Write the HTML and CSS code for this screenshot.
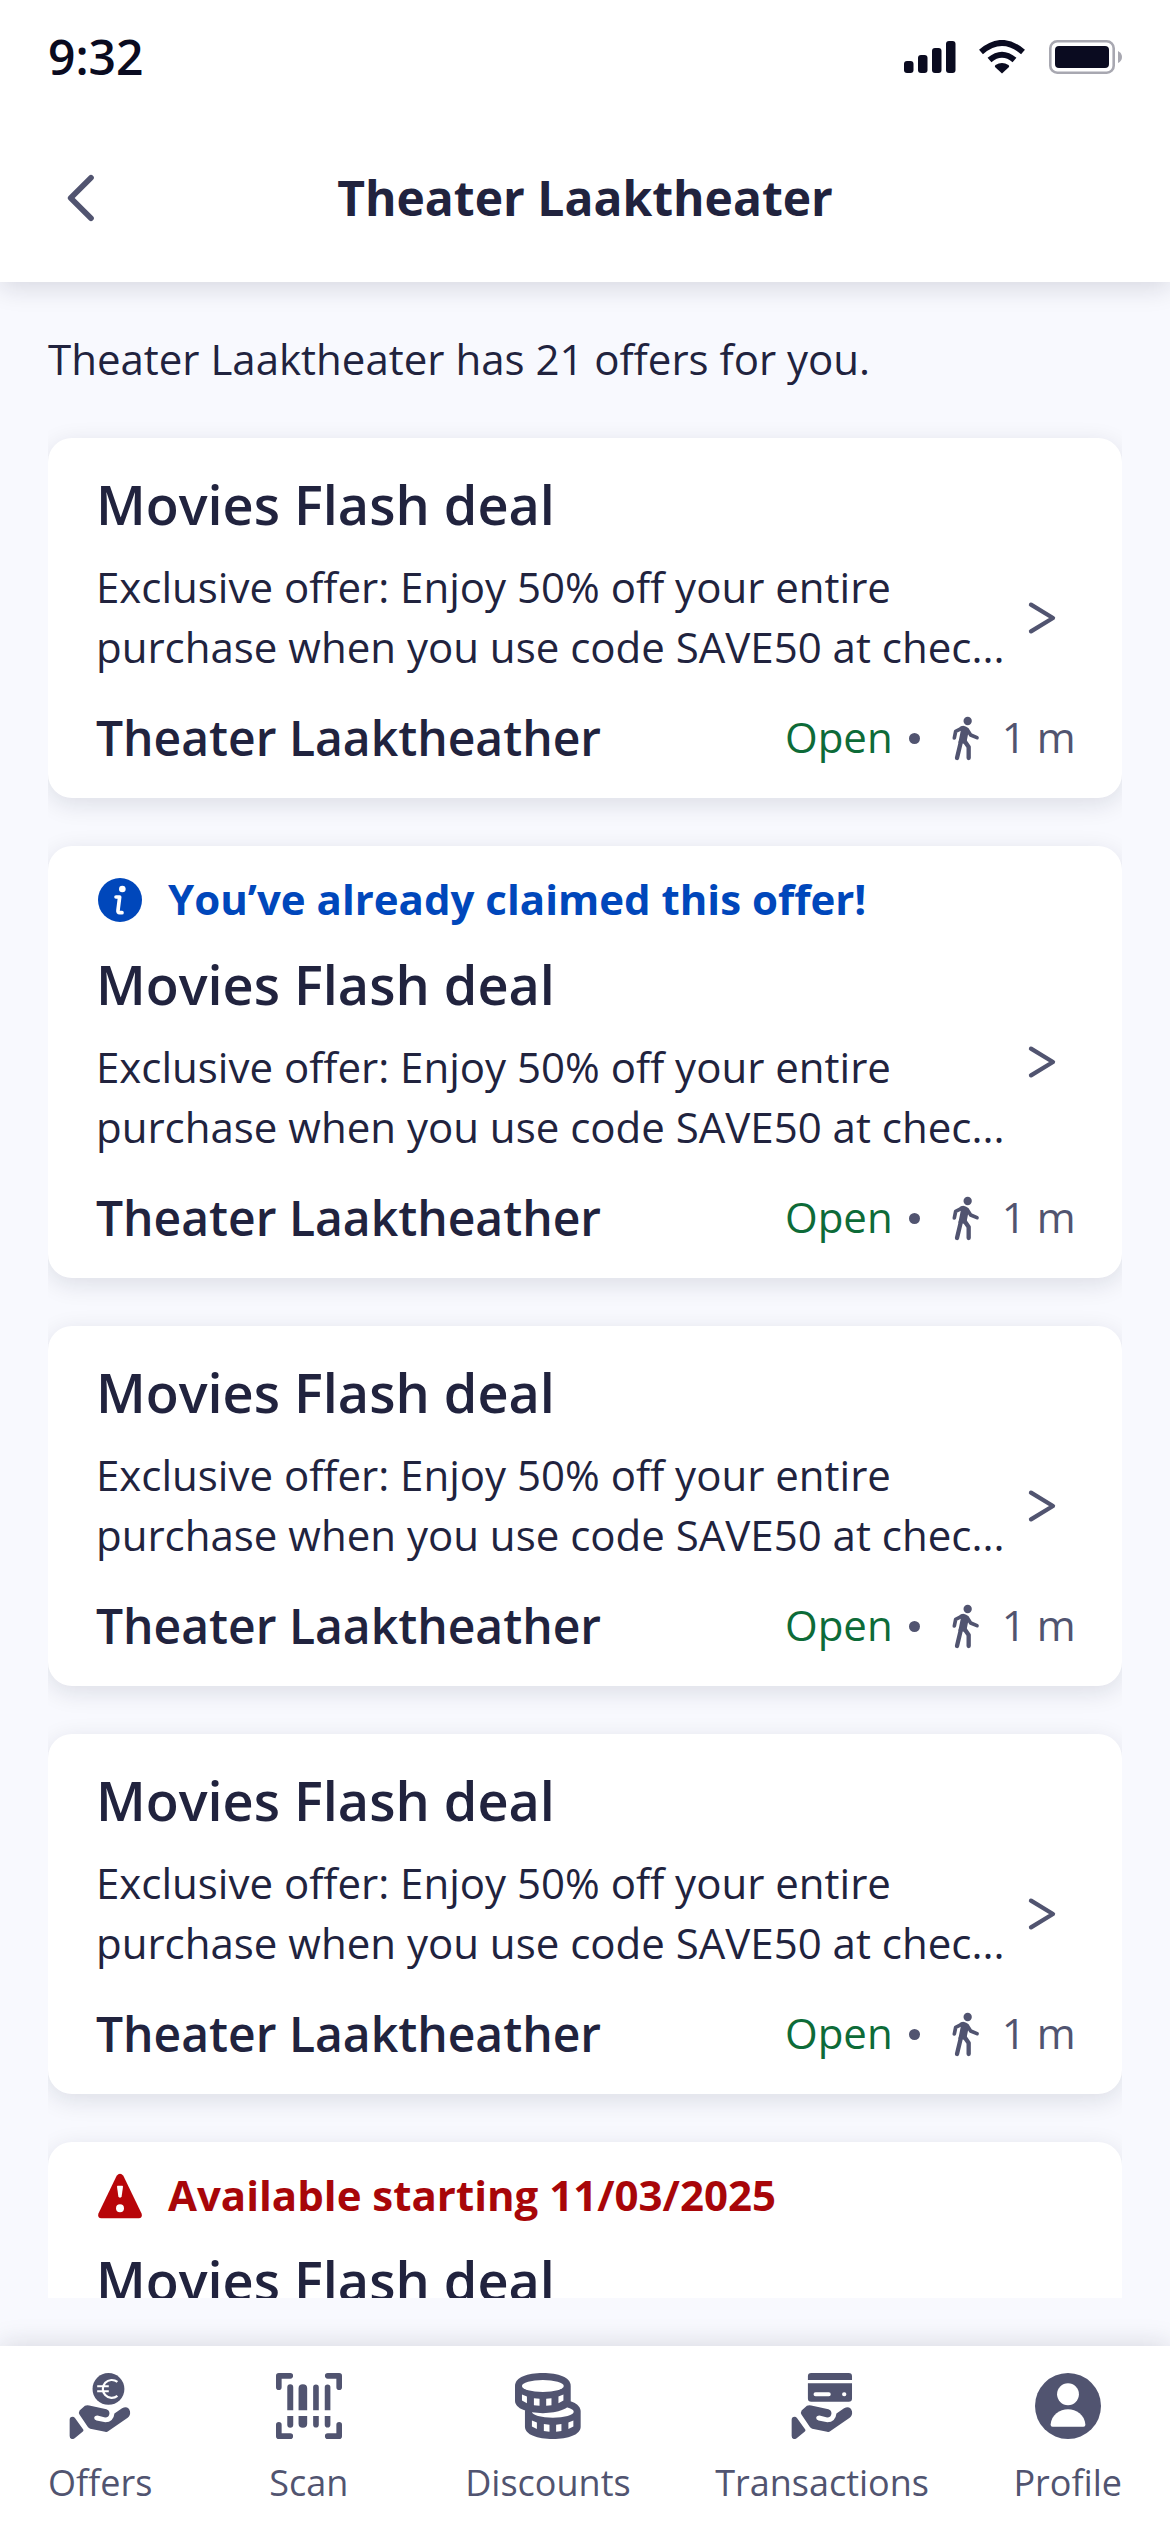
FILE: index.html
```html
<!DOCTYPE html>
<html lang="en">
<head>
<meta charset="utf-8">
<title>Theater Laaktheater</title>
<link rel="stylesheet" href="styles.css">
</head>
<body>
<svg class="sprite" aria-hidden="true">
  <symbol id="hand" viewBox="0 0 199 199">
    <path d="M8 141Q8 132 17 132Q21 132 24 136L49 170Q51 174 47 177L24 196Q19 200 14 199Q8 198 8 190Z"/>
    <path d="M38 113L54 99Q60 96 67 98L119 109Q128 112 128 122Q127 134 115 134L92 128Q82 128 82 136Q82 141 89 143L112 148Q140 150 143 122L166 106Q185 98 190 116Q192 128 183 135L124 176Q120 179 115 177L70 168Q66 167 63 163L38 126Q34 119 38 113Z"/>
  </symbol>
  <symbol id="walk" viewBox="0 0 135 135">
    <circle cx="74" cy="15" r="12.5"/>
    <path d="M50 33Q60 27 70 32Q78 37 77 46L71 76L65 83L46 80L53 46Z"/>
    <g fill="none" stroke="currentColor" stroke-linecap="round" stroke-linejoin="round">
      <path stroke-width="11" d="M60 35L38 46L34 66M72 40L83 57L102 65"/>
      <path stroke-width="13" d="M54 76L42 126M64 74L77 93V126"/>
    </g>
  </symbol>
  <symbol id="next" viewBox="0 0 90 108">
    <path d="M12 14L78 54L12 94" fill="none" stroke="currentColor" stroke-width="13" stroke-linecap="round" stroke-linejoin="round"/>
  </symbol>
</svg>
<div class="screen">
  <header class="top">
    <div class="status">
      <span class="time">9:32</span>
      <svg class="status-icons" viewBox="0 0 218 34">
        <rect x="0" y="21" width="9.5" height="12" rx="3"/>
        <rect x="14" y="15" width="9.5" height="18" rx="3"/>
        <rect x="28" y="8" width="9.5" height="25" rx="3"/>
        <rect x="42" y="1" width="9.5" height="32" rx="3"/>
        <path d="M98 33.5L91 27Q90.500 26 91.500 25Q98 21 104.500 25Q105.500 26 105 27Z"/>
        <path d="M85.500 20Q98 9.500 110.500 20" fill="none" stroke="currentColor" stroke-width="6"/>
        <path d="M77 12Q98 -6 119 12" fill="none" stroke="currentColor" stroke-width="6"/>
        <rect x="146.300" y="1.300" width="63.400" height="31.400" rx="7" fill="none" stroke="#a8a8b1" stroke-width="2.600"/>
        <rect x="151" y="6" width="54" height="22" rx="4"/>
        <path d="M214 11Q218 13 218 17T214 23Z" fill="#a8a8b1"/>
      </svg>
    </div>
    <div class="bar">
      <svg class="back" viewBox="0 0 96 144"><path d="M78 11L17 72L78 133" fill="none" stroke="currentColor" stroke-width="17" stroke-linecap="round" stroke-linejoin="round"/></svg>
      <h1>Theater Laaktheater</h1>
    </div>
  </header>

  <main>
    <p class="intro">Theater Laaktheater has 21 offers for you.</p>
    <div class="list">
      <article class="card">
        <h2>Movies Flash deal</h2>
        <p class="desc">Exclusive offer: Enjoy 50% off your entire<br>purchase when you use code SAVE50 at chec...</p>
        <svg class="next"><use href="#next"/></svg>
        <div class="foot"><span class="venue">Theater Laaktheather</span><span class="open">Open</span><i class="dot"></i><svg class="walk"><use href="#walk"/></svg><span class="dist">1 m</span></div>
      </article>
      <article class="card">
        <div class="note info">
          <svg viewBox="0 0 144 144"><circle cx="72" cy="72" r="66" fill="currentColor"/><circle cx="79" cy="39" r="10" fill="#fff"/><path d="M60 63H71L66 103Q65 110 71 110H78" fill="none" stroke="#fff" stroke-width="11" stroke-linecap="round" stroke-linejoin="round"/></svg>
          <span>You’ve already claimed this offer!</span>
        </div>
        <h2>Movies Flash deal</h2>
        <p class="desc">Exclusive offer: Enjoy 50% off your entire<br>purchase when you use code SAVE50 at chec...</p>
        <svg class="next"><use href="#next"/></svg>
        <div class="foot"><span class="venue">Theater Laaktheather</span><span class="open">Open</span><i class="dot"></i><svg class="walk"><use href="#walk"/></svg><span class="dist">1 m</span></div>
      </article>
      <article class="card">
        <h2>Movies Flash deal</h2>
        <p class="desc">Exclusive offer: Enjoy 50% off your entire<br>purchase when you use code SAVE50 at chec...</p>
        <svg class="next"><use href="#next"/></svg>
        <div class="foot"><span class="venue">Theater Laaktheather</span><span class="open">Open</span><i class="dot"></i><svg class="walk"><use href="#walk"/></svg><span class="dist">1 m</span></div>
      </article>
      <article class="card">
        <h2>Movies Flash deal</h2>
        <p class="desc">Exclusive offer: Enjoy 50% off your entire<br>purchase when you use code SAVE50 at chec...</p>
        <svg class="next"><use href="#next"/></svg>
        <div class="foot"><span class="venue">Theater Laaktheather</span><span class="open">Open</span><i class="dot"></i><svg class="walk"><use href="#walk"/></svg><span class="dist">1 m</span></div>
      </article>
      <article class="card">
        <div class="note warn">
          <svg viewBox="0 0 144 144"><path d="M62 11Q72 0 82 11L137 125Q140 138 128 139H16Q4 138 7 125Z" fill="#b80509"/><path d="M65 41H79Q81 41 81 44L77 73Q76 77 72 77T67 73L63 44Q63 41 65 41Z" fill="#fff"/><circle cx="72" cy="109" r="12" fill="#fff"/></svg>
          <span>Available starting 11/03/2025</span>
        </div>
        <h2>Movies Flash deal</h2>
      </article>
    </div>
  </main>

  <nav class="tabs">
    <a class="tab">
      <svg viewBox="0 0 199 199"><use href="#hand"/><circle cx="125" cy="48" r="48"/><path d="M152 27A27 27 0 1 0 152 69M91 40H126M91 55H126" fill="none" stroke="#fff" stroke-width="6.500"/></svg>
      <span>Offers</span>
    </a>
    <a class="tab scan">
      <svg viewBox="0 0 199 199"><path d="M8.500 43V8.500H43M156 8.500H190.500V43M190.500 156V190.500H156M43 190.500H8.500V156" fill="none" stroke="currentColor" stroke-width="17" stroke-linecap="round" stroke-linejoin="round"/><path d="M34 112V43a9 9 0 0 1 18 0V112ZM68 112V46q0-12 13-12t13 12V112ZM112 112V43a8.500 8.500 0 0 1 17 0V112ZM147 112V43a8.500 8.500 0 0 1 17 0V112ZM34 130V156a9 9 0 0 0 18 0V130ZM68 130V153q0 12 13 12t13-12V130ZM112 130V156a8.500 8.500 0 0 0 17 0V130ZM147 130V156a8.500 8.500 0 0 0 17 0V130Z"/></svg>
      <span>Scan</span>
    </a>
    <a class="tab">
      <svg viewBox="0 0 199 199">
        <path d="M30 117C30 91 68 78 114 78S198 91 198 117V162C198 186 160 199 114 199S30 186 30 162Z"/>
        <ellipse cx="114" cy="117" rx="63" ry="18" fill="#fff"/>
        <path d="M0 39C0 13 38 0 84 0S168 13 168 39V84C168 108 130 121 84 121S0 108 0 84Z"/>
        <ellipse cx="84" cy="39" rx="63" ry="18" fill="#fff"/>
        <path id="coin-slots" fill="#fff" d="M21 65L36 71V91L21 83ZM57 76L74 78V99L57 97ZM94 78L110 76V97L94 99ZM131 71L146 65V83L131 91Z"/>
        <use href="#coin-slots" x="30" y="78"/>
      </svg>
      <span>Discounts</span>
    </a>
    <a class="tab">
      <svg viewBox="0 0 199 199"><use href="#hand"/><path d="M57 21V10Q57 0 67 0H180Q190 0 190 10V21ZM57 31H190V77Q190 87 180 87H67Q57 87 57 77Z"/><path d="M80 64H120M166 64H167" fill="none" stroke="#fff" stroke-width="12" stroke-linecap="round"/></svg>
      <span>Transactions</span>
    </a>
    <a class="tab">
      <svg viewBox="0 0 199 199"><circle cx="99.500" cy="99.500" r="99.500"/><circle cx="99.500" cy="64" r="33" fill="#fff"/><path d="M47 156C49 125 75 109 99.500 109S150 125 152 156Q152 162 146 162H53Q47 162 47 156Z" fill="#fff"/></svg>
      <span>Profile</span>
    </a>
  </nav>
</div>
</body>
</html>
```
FILE: styles.css
```css
* { box-sizing: border-box; margin: 0; padding: 0; }
body { font-family: "Open Sans", "Noto Sans", sans-serif; font-size: 42px; line-height: 60px; color: #21233e; background: #f8f9fe; }
svg { display: block; fill: currentColor; flex: none; }
.sprite { display: none; }
.screen { width: 1170px; height: 2532px; display: flex; flex-direction: column; overflow: hidden; }

.top { height: 282px; flex: none; background: #fff; box-shadow: 0 6px 24px rgba(20, 22, 50, .14); z-index: 1; }
.status { height: 114px; display: flex; align-items: center; justify-content: space-between; padding: 0 48px; color: #0a0b20; }
.time { font-size: 48px; font-weight: 600; }
.status-icons { width: 218px; height: 34px; }
.bar { height: 168px; display: grid; grid-template-columns: 96px 1fr 96px; align-items: center; padding: 0 48px; }
.back { width: 32px; height: 48px; margin-left: 17px; color: #515470; }
h1 { font-size: 48px; line-height: 72px; font-weight: 700; text-align: center; }

main { height: 2016px; flex: none; padding: 47px 48px 0; }
.intro { height: 60px; }
.list { height: 1909px; padding-top: 49px; overflow: hidden; display: flex; flex-direction: column; gap: 48px; }
.card { flex: none; background: #fff; border-radius: 24px; padding: 24px 48px; display: grid; grid-template-columns: 1fr 72px; row-gap: 12px; box-shadow: 0 6px 24px rgba(20, 22, 50, .12); }
.note { grid-column: 1 / 3; grid-row: 1; display: flex; align-items: center; gap: 24px; font-weight: 700; }
.note svg { width: 48px; height: 48px; }
.note span { padding-bottom: 2px; line-height: 58px; }
.info { color: #0047bb; }
.warn { color: #a80609; }
h2 { grid-column: 1; grid-row: 2; font-size: 54px; line-height: 84px; font-weight: 600; }
.card > h2:first-child { margin-top: -12px; }
.desc { grid-column: 1; grid-row: 3; white-space: nowrap; margin: -1px 0 1px; }
.next { grid-column: 2; grid-row: 1 / 5; align-self: center; width: 30px; height: 36px; margin-left: 22px; color: #515470; }
.foot { grid-column: 1 / 3; grid-row: 4; height: 72px; margin-top: 12px; display: flex; align-items: center; color: #515470; }
.venue { flex: 1; font-size: 48px; font-weight: 600; color: #21233e; }
.open, .dist { padding-bottom: 2px; }
.open { color: #0d6b38; }
.dot { width: 11px; height: 11px; border-radius: 50%; background: currentColor; margin: 0 23px 0 16px; }
.walk { width: 45px; height: 45px; margin-right: 14px; }
.dist { padding-right: 1px; }

.tabs { height: 186px; margin-top: 48px; flex: none; background: #fff; box-shadow: 0 -3px 24px rgba(20, 22, 50, .13); display: flex; justify-content: space-between; padding: 27px 48px 0; color: #515470; font-size: 36px; line-height: 54px; z-index: 1; }
.tab { display: flex; flex-direction: column; align-items: center; gap: 17px; }
.tab > svg { width: 66px; height: 66px; }
.scan { width: 144px; }
```
